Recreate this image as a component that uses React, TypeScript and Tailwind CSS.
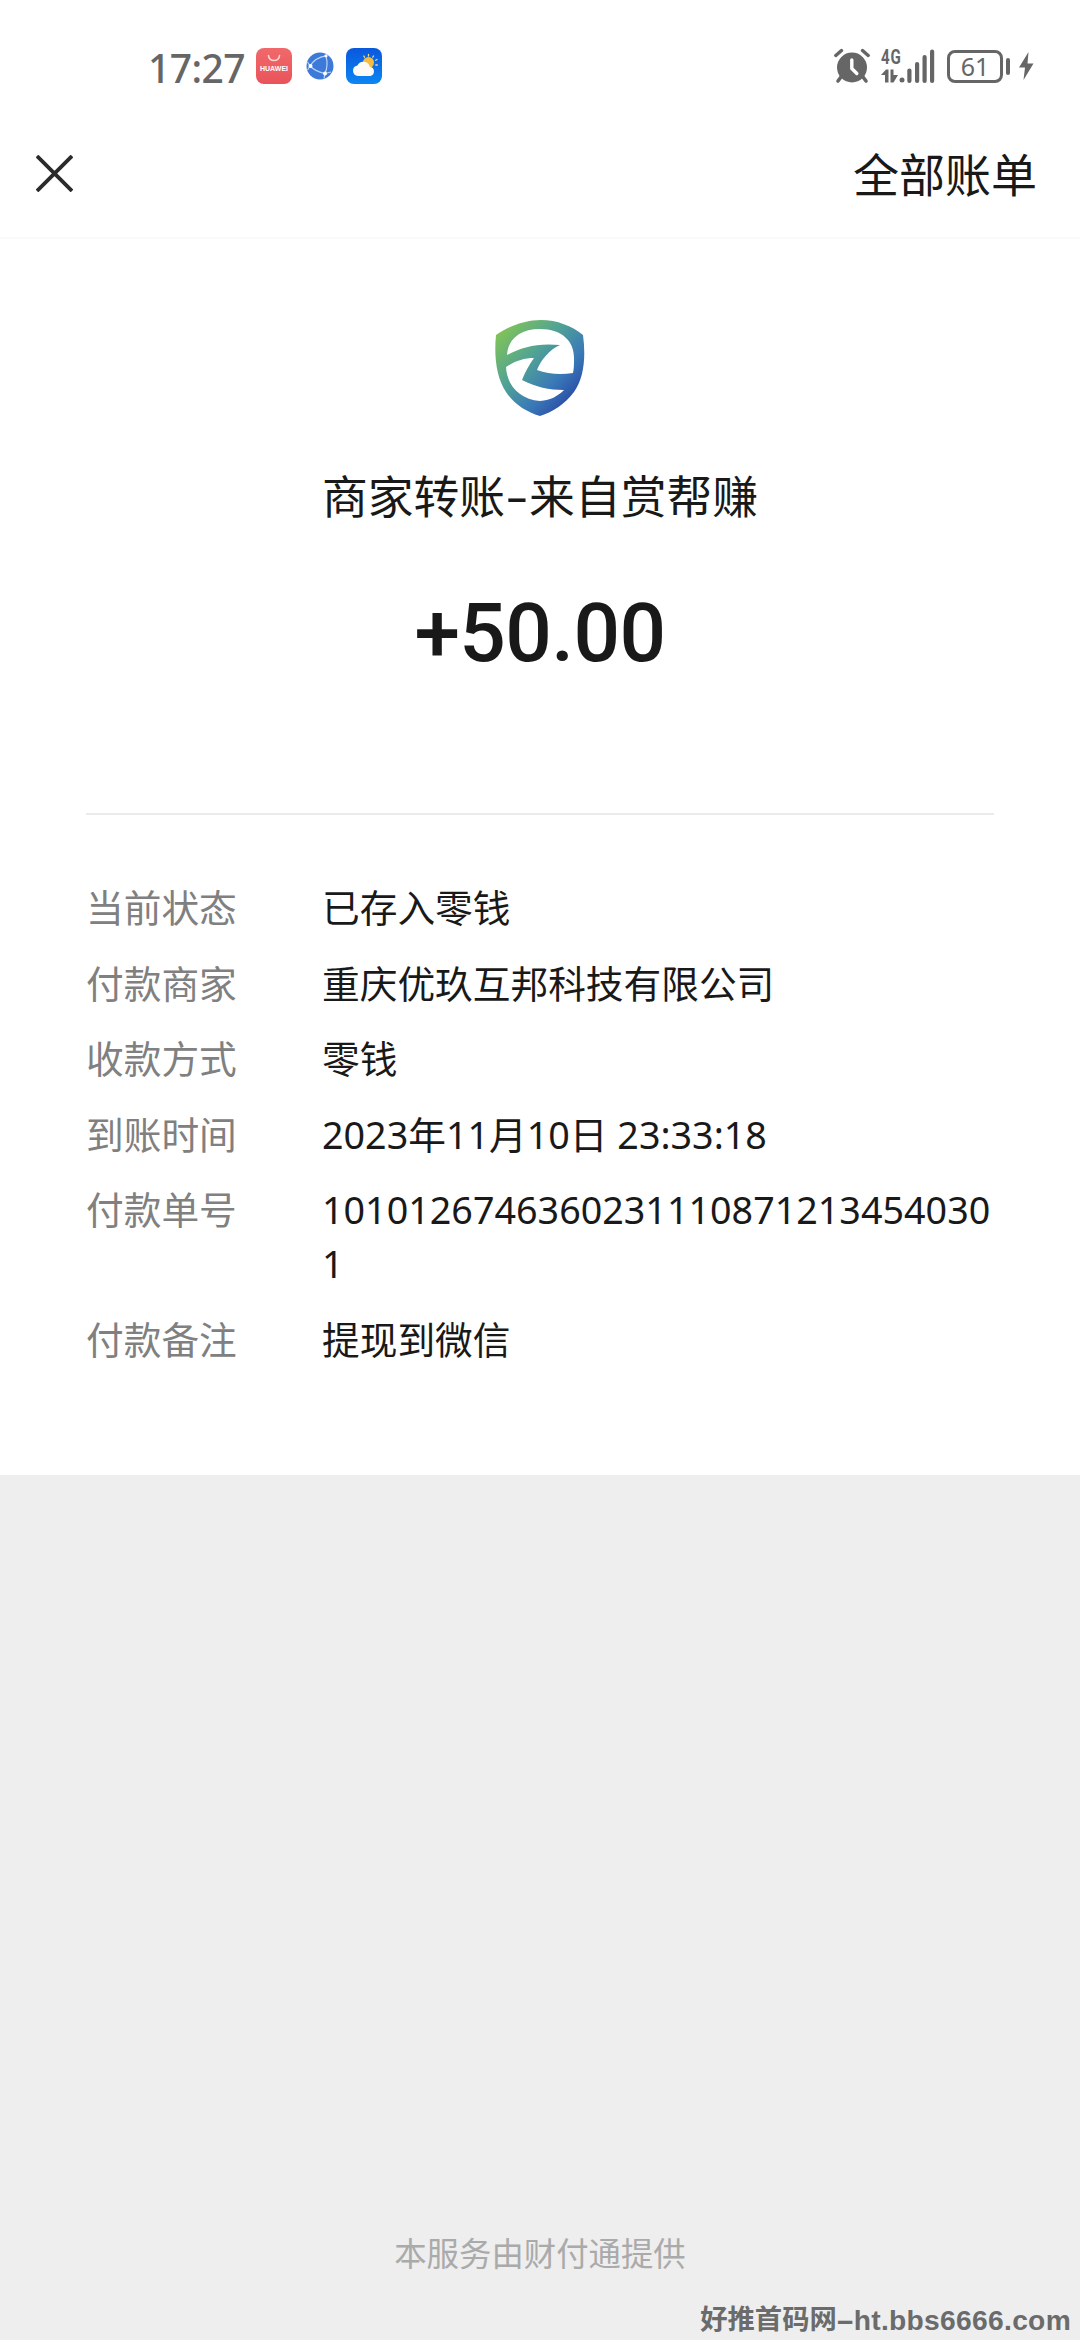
const details = [
  { label: '当前状态', value: '已存入零钱' },
  { label: '付款商家', value: '重庆优玖互邦科技有限公司' },
  { label: '收款方式', value: '零钱' },
  { label: '到账时间', value: '2023年11月10日 23:33:18' },
  { label: '付款单号', value: '10101267463602311108712134540301' },
  { label: '付款备注', value: '提现到微信' },
];

function StoreIcon() {
  return (
    <div className="flex h-9 w-9 flex-col items-center rounded-lg bg-linear-to-b from-[#f0696b] to-[#e9535b]">
      <svg className="mt-[6px] h-[8px] w-4" viewBox="0 0 16 8" fill="none">
        <path d="M2.5 1.5a5.5 5 0 0 0 11 0" stroke="#ffd5d3" strokeWidth="1.6" strokeLinecap="round" />
      </svg>
      <span className="mt-[3px] font-['Liberation_Sans'] text-[7px] font-bold leading-[8px] text-white">HUAWEI</span>
    </div>
  );
}

function BrowserIcon() {
  return (
    <svg className="h-7 w-7" viewBox="0 0 28 28" fill="none">
      <circle cx="14" cy="14" r="13.5" fill="#3d79d9" />
      <g stroke="#b9d6f8" strokeWidth="1.2">
        <path d="M4 14C7 9 12 5 20 3.8" />
        <path d="M4 14c4 4 9 6.500 15 7.500" />
        <path d="M20 3.800c1.500 6 1.500 12-1 17.700" />
        <path d="M1.500 10 4 14l-2.500 4M19 21.500l-1 5M19 21.500l6-1.500" />
      </g>
      <g fill="#fff">
        <circle cx="4.500" cy="14" r="2" />
        <circle cx="19" cy="21.500" r="2" />
        <circle cx="20" cy="3.800" r="1.600" />
      </g>
    </svg>
  );
}

function WeatherIcon() {
  return (
    <svg className="h-9 w-9" viewBox="0 0 36 36">
      <defs>
        <linearGradient id="sky" x1="0" y1="0" x2="0" y2="1">
          <stop offset="0" stopColor="#0a58dc" />
          <stop offset="1" stopColor="#0c86f2" />
        </linearGradient>
      </defs>
      <rect width="36" height="36" rx="8" fill="url(#sky)" />
      <g stroke="#f3d77c" strokeWidth="1.300" strokeLinecap="round">
        <path d="M22.500 6.500v1.500M27.500 8l-.7 1.300M31 11.500l-1.300.8M29.800 17h1.500M17.800 8l.7 1.200" />
      </g>
      <circle cx="22.500" cy="14.500" r="5.500" fill="#f6bd3d" />
      <path d="M12 28a5.300 5.300 0 0 1-.6-10.500 6.600 6.600 0 0 1 12.400 1.300A4.700 4.700 0 0 1 24.500 28Z" fill="#fdfaf5" />
    </svg>
  );
}

function AlarmIcon() {
  return (
    <svg className="h-9 w-9" viewBox="0 0 36 36" fill="none">
      <circle cx="18" cy="19.500" r="15" fill="#666" />
      <path d="M1.800 7.500 7.500 2.500M34.200 7.500 28.500 2.500" stroke="#666" strokeWidth="3.400" strokeLinecap="round" />
      <path d="m7 29-3 4M29 29l3 4" stroke="#666" strokeWidth="3.600" strokeLinecap="round" />
      <path d="M17.800 12v8.500l5 5" stroke="#fff" strokeWidth="3.400" strokeLinecap="round" strokeLinejoin="round" />
    </svg>
  );
}

function SignalIcon() {
  return (
    <div className="relative h-9 w-[54px]">
      <span className="absolute top-0 left-0 origin-left scale-x-[0.72] font-['Roboto'] text-[21px] font-bold leading-[18px] tracking-[1px] text-[#666]">4G</span>
      <svg className="h-9 w-[54px]" viewBox="0 0 54 36" fill="none">
        <g fill="#666">
          <path d="M7.500 34.500H4V27H0l5-5.500h2.500zM9.500 21.500H12.500V27H17l-4.500 7.500h-3z" />
          <circle cx="21" cy="32" r="2.500" />
          <rect x="26.300" y="20.500" width="4.200" height="14.500" rx="2.100" />
          <rect x="34" y="14" width="4.200" height="21" rx="2.100" />
          <rect x="41.500" y="7" width="4.200" height="28" rx="2.100" />
          <rect x="49" y="1.500" width="4.200" height="33.500" rx="2.100" />
        </g>
      </svg>
    </div>
  );
}

function Battery() {
  return (
    <div className="flex items-center">
      <div className="flex h-[33px] w-14 items-center justify-center rounded-[8px] border-[3px] border-[#666] font-['Noto_Sans'] text-[25px] leading-none text-[#666]">
        61
      </div>
      <div className="ml-[3px] h-[17px] w-1 rounded-full bg-[#666]" />
      <svg className="ml-[9px] h-[30px] w-[15px]" viewBox="0 0 15 30">
        <path d="M9.500 1 0 16.500h6L4.500 29 14.500 12.500H8.500z" fill="#666" />
      </svg>
    </div>
  );
}

function StatusBar() {
  return (
    <div className="flex h-[132px] items-center justify-between pr-[46px] pl-[148px]">
      <div className="flex items-center">
        <span className="w-[108px] pt-[2px] font-['Noto_Sans'] text-[39px] font-medium leading-none tracking-[-0.6px] text-[#666]">17:27</span>
        <StoreIcon />
        <div className="ml-[14px] flex">
          <BrowserIcon />
        </div>
        <div className="ml-[12px]">
          <WeatherIcon />
        </div>
      </div>
      <div className="flex items-center">
        <AlarmIcon />
        <div className="ml-[11px]">
          <SignalIcon />
        </div>
        <div className="ml-[12px]">
          <Battery />
        </div>
      </div>
    </div>
  );
}

function MerchantLogo() {
  return (
    <svg className="h-[98px] w-[90px]" viewBox="0 0 90 98">
      <defs>
        <linearGradient id="shield" x1="0.05" y1="0.1" x2="0.85" y2="0.9">
          <stop offset="0" stopColor="#82c455" />
          <stop offset="0.4" stopColor="#50a296" />
          <stop offset="0.72" stopColor="#3a79b8" />
          <stop offset="1" stopColor="#2848a4" />
        </linearGradient>
      </defs>
      <path
        fill="url(#shield)"
        fillRule="evenodd"
        d="M1 16C14 7 30 1 46 1s31 6 42 15c3 22 1 43-9 57-9 12-21 20-34 24C31 93 19 85 11 73 1 58-1 37 1 16ZM12 36C13 20 25 10 45 10 67 10 79 22 79 39c0 6 0 10-1 15-13 2-25 1-36-3 4-10 12-20 23-25-24-2-37 2-53 10ZM11 48c9-6 18-9 28-9-5 7-9 14-12 22 14 7 27 10 42 10-6 6-13 10-24 11C25 80 12 67 11 48Z"
      />
    </svg>
  );
}

export default function App() {
  return (
    <div className="flex h-[2340px] w-[1080px] flex-col overflow-hidden bg-[#eee] font-['Noto_Sans','Noto_Sans_CJK_SC',sans-serif] text-[#191919]">
      <div className="flex h-[1475px] flex-col bg-white">
        <StatusBar />
        <header className="flex h-[107px] items-start justify-between border-b-2 border-[#fafafa] pr-[43px] pl-9">
          <svg className="mt-[23px] h-[37px] w-[37px]" viewBox="0 0 37 37">
            <path d="M1 1 36 36M36 1 1 36" stroke="#2b2b2b" strokeWidth="3.800" />
          </svg>
          <h1 className="mt-3 text-[46px] leading-[60px]">全部账单</h1>
        </header>

        <div className="flex flex-col items-center">
          <div className="mt-[80px]">
            <MerchantLogo />
          </div>
          <h2 className="mt-[49px] text-[45.800px] leading-[60px]">商家转账<span className="inline-block w-6 -translate-y-[2px] scale-x-[1.55] text-center">-</span>来自赏帮赚</h2>
          <div className="mt-[57px] font-['Roboto'] text-[82px] font-medium leading-[100px] tracking-[-0.600px]">+50.00</div>
        </div>

        <dl className="mx-[86px] mt-[130px] flex flex-col gap-[21.600px] border-t-2 border-[#ebebeb] pt-[66px] text-[37.700px] leading-[54px]">
          {details.map((item) => (
            <div key={item.label} className="flex">
              <dt className="w-[236px] shrink-0 text-[#808080]">{item.label}</dt>
              <dd className="w-[672px] break-all">{item.value}</dd>
            </div>
          ))}
        </dl>
      </div>

      <footer className="mt-auto flex flex-col">
        <p className="text-center text-[32.400px] leading-[46px] text-[#aaa]">本服务由财付通提供</p>
        <p className="mt-[24px] flex justify-end pr-[9px] font-['Liberation_Sans','Noto_Sans_CJK_SC',sans-serif] text-[28.200px] font-bold leading-[40px] tracking-[0.300px] text-[#6b6b6b]">
          <span className="text-[27.300px] tracking-normal">好推首码网</span>
          <span className="w-[17px] scale-x-[2] text-center">-</span>
          <span>ht.bbs6666.com</span>
        </p>
      </footer>
    </div>
  );
}
